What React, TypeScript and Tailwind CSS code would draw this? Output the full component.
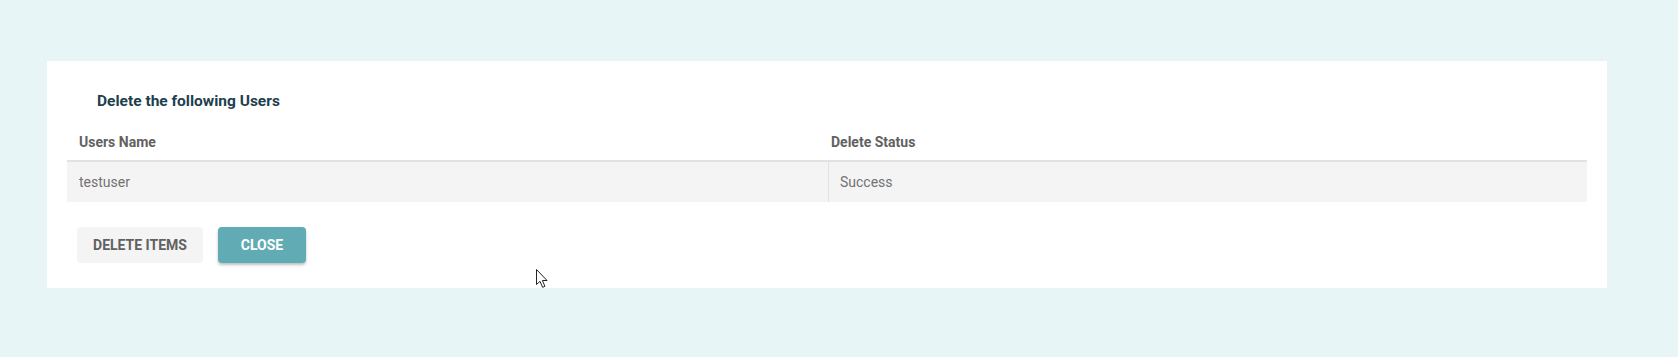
import { useState } from 'react';

interface UserRow {
  name: string;
  status: string;
}

const rows: UserRow[] = [{ name: 'testuser', status: 'Success' }];

function Cursor() {
  return (
    <svg
      className="absolute left-[536px] top-[269px] pointer-events-none"
      width="13"
      height="20"
      viewBox="0 0 13 20"
    >
      <path
        d="M0.5 0.5 L0.5 15.5 L4 12.3 L6.6 18.3 L8.9 17.3 L6.4 11.5 L11 11.5 Z"
        fill="#fff"
        stroke="#222"
        strokeWidth="1"
        strokeLinejoin="miter"
      />
    </svg>
  );
}

function App(): JSX.Element {
  const [open, setOpen] = useState<boolean>(true);

  return (
    <div className="relative h-[357px] w-full bg-[#e8f5f6] pt-[61px] font-['Roboto',sans-serif]">
      {open && (
        <section className="ml-[47px] w-[1560px] h-[227px] bg-white pt-[30px]">
          <h2 className="pl-[50px] text-[15.5px] leading-5 font-bold text-[#1e3f4d]">
            Delete the following Users
          </h2>

          <div className="mx-5 mt-3">
            <div className="flex h-[39px] items-center border-b-2 border-[#e2e2e2] text-sm font-bold text-[#616161]">
              <div className="w-[761px] pl-3">Users Name</div>
              <div className="flex-1 pl-[3px]">Delete Status</div>
            </div>
            {rows.map((row) => (
              <div key={row.name} className="flex h-10 bg-[#f4f4f4] text-sm text-[#727272]">
                <div className="flex w-[761px] items-center pl-3">{row.name}</div>
                <div className="flex flex-1 items-center border-l border-[#e2e2e2] pl-[11px]">
                  {row.status}
                </div>
              </div>
            ))}
          </div>

          <div className="mt-[25px] flex gap-[15px] pl-[30px]">
            <button
              type="button"
              className="h-9 w-[126px] rounded bg-[#f4f4f4] text-sm font-bold uppercase text-[#616161]"
            >
              Delete Items
            </button>
            <button
              type="button"
              onClick={() => setOpen(false)}
              className="h-9 w-[88px] rounded bg-[#61abb5] text-sm font-bold uppercase text-white shadow-[0_2px_3px_rgba(0,0,0,0.25)]"
            >
              Close
            </button>
          </div>
        </section>
      )}
      <Cursor />
    </div>
  );
}

export default App;
